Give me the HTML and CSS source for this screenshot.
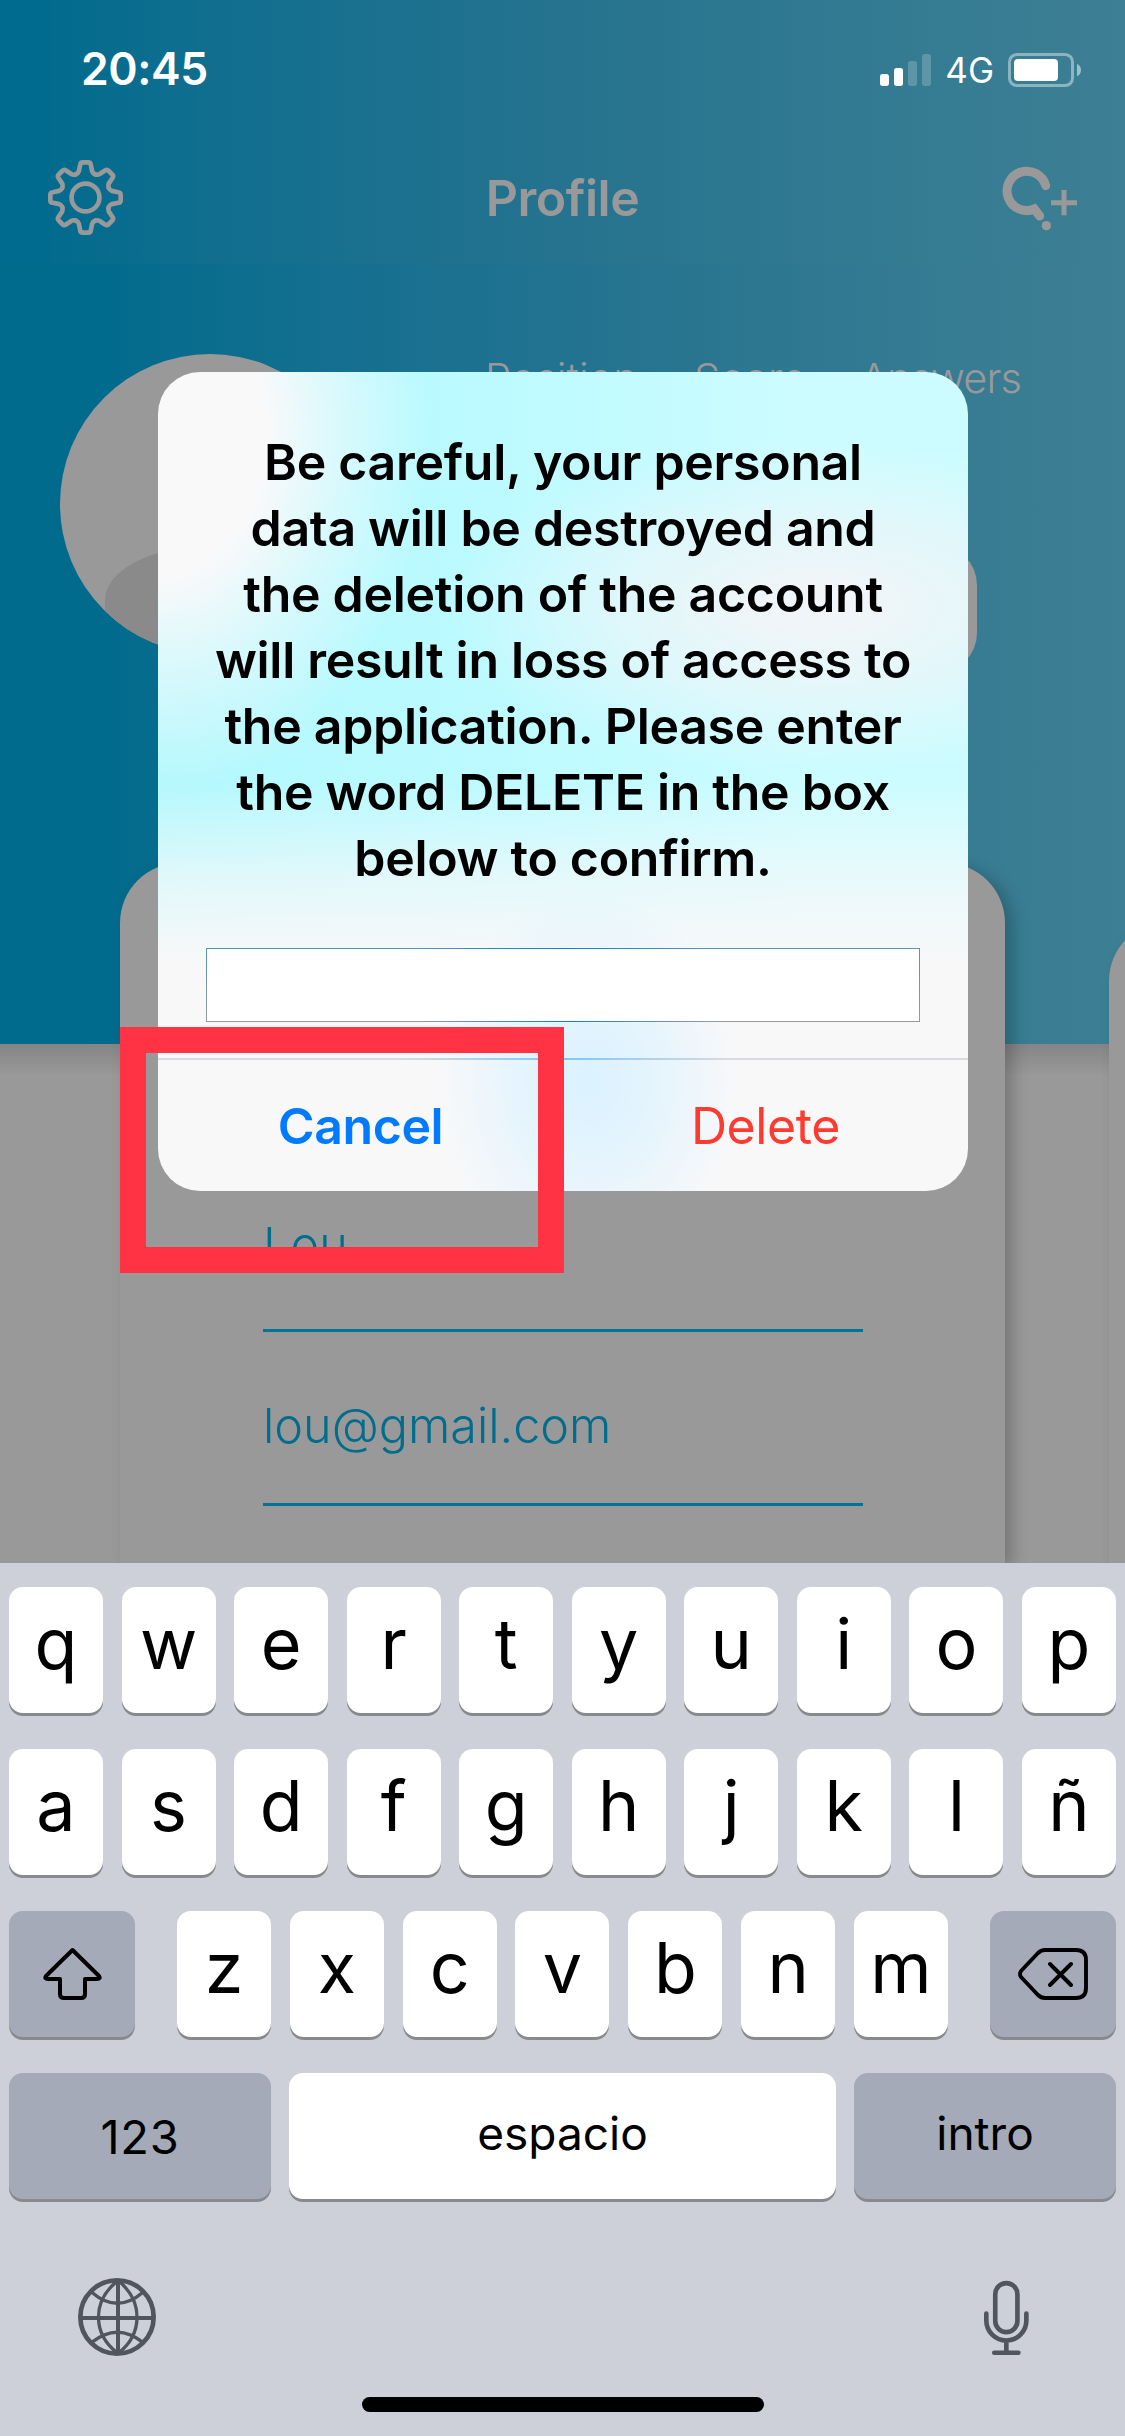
FILE: index.html
```html
<!DOCTYPE html>
<html lang="en">
<head>
<meta charset="utf-8">
<title>Profile</title>
<link rel="stylesheet" href="styles.css">
</head>
<body>
<div class="phone">
  <header class="top">
    <div class="status">
      <span class="time">20:45</span>
      <div class="indicators">
        <svg class="signal" viewBox="63 66 153 102"><g fill="#fff"><rect x="63" y="129" width="27" height="36" rx="8"/><rect x="105" y="111" width="27" height="54" rx="8"/><g opacity=".2"><rect x="147" y="90" width="27" height="75" rx="8"/><rect x="189" y="69" width="27" height="96" rx="8"/></g></g></svg>
        <span class="network">4G</span>
        <svg class="battery" viewBox="444 66 219 102"><rect x="448.500" y="70.500" width="189" height="93" rx="22" fill="none" stroke="#fff" stroke-width="9" opacity=".42"/><rect x="462" y="84" width="132" height="66" rx="12" fill="#fff"/><path d="M651 98Q663 104 663 117T651 136Z" fill="#fff" opacity=".5"/></svg>
      </div>
    </div>
    <nav class="nav">
      <svg class="gear" viewBox="54 59 226 226" fill="none" stroke="#999" stroke-width="14" stroke-linecap="round" stroke-linejoin="round">
        <defs><path id="tooth" d="M138 102Q145 99 147 93L151 73Q152 66 159 66H175Q182 66 183 73L187 93Q189 99 196 102"/></defs>
        <use href="#tooth"/><use href="#tooth" transform="rotate(45 167 172)"/><use href="#tooth" transform="rotate(90 167 172)"/><use href="#tooth" transform="rotate(135 167 172)"/><use href="#tooth" transform="rotate(180 167 172)"/><use href="#tooth" transform="rotate(225 167 172)"/><use href="#tooth" transform="rotate(270 167 172)"/><use href="#tooth" transform="rotate(315 167 172)"/>
        <circle cx="167" cy="172" r="42"/>
      </svg>
      <h1 class="title">Profile</h1>
      <svg class="ask" viewBox="426 405 225 195" fill="none" stroke="#999"><path d="M557 464A59 59 0 1 0 523 534L539 555" stroke-width="27" stroke-linecap="round" stroke-linejoin="miter"/><circle cx="559" cy="584" r="14" fill="#999" stroke="none"/><path d="M573 515H651M612 477V553" stroke-width="15"/></svg>
    </nav>
  </header>

  <main class="profile">
    <section class="hero">
      <div class="avatar"></div>
      <div class="summary">
        <div class="stats"><span>Position</span><span>Score</span><span class="answers">Answers</span></div>
        <div class="edit"></div>
      </div>
    </section>
    <section class="cards">
      <form class="card">
        <div class="field name">Lou</div>
        <div class="field mail">lou@gmail.com</div>
      </form>
      <div class="card next"></div>
    </section>
  </main>

  <section class="keyboard">
    <div class="row"><b>q</b><b>w</b><b>e</b><b>r</b><b>t</b><b>y</b><b>u</b><b>i</b><b>o</b><b>p</b></div>
    <div class="row"><b>a</b><b>s</b><b>d</b><b>f</b><b>g</b><b>h</b><b>j</b><b>k</b><b>l</b><b>ñ</b></div>
    <div class="row">
      <span class="fn side"><svg class="shift" viewBox="0 0 60 54" fill="none" stroke="#000" stroke-width="4" stroke-linejoin="round"><path d="M30.500 3L57 29Q59 32 55 32H43V47Q43 51 39 51H22Q18 51 18 47V32H6Q2 32 4 29Z"/></svg></span>
      <div class="letters"><b>z</b><b>x</b><b>c</b><b>v</b><b>b</b><b>n</b><b>m</b></div>
      <span class="fn side"><svg class="erase" viewBox="0 0 70 52" fill="none" stroke="#000" stroke-width="3.900" stroke-linecap="round" stroke-linejoin="round"><path d="M27 2H58Q68 2 68 12V40Q68 50 58 50H27Q23 50 20 47L3 29Q1 26 3 23L20 5Q23 2 27 2ZM32 16L53 37M53 16L32 37"/></svg></span>
    </div>
    <div class="row"><span class="fn wide num">123</span><span class="space">espacio</span><span class="fn wide">intro</span></div>
    <div class="tools">
      <svg class="globe" viewBox="54 54 234 234" fill="none" stroke="#50555e" stroke-width="10"><circle cx="171" cy="171" r="110" stroke-width="14"/><path d="M174 60V282M60 174H282" stroke-width="12"/><path d="M171 64C97 124 97 220 171 278M177 64C249 124 249 220 177 278M95 97Q172 163 249 97M95 247Q172 186 249 247"/></svg>
      <svg class="mic" viewBox="72 59 136 227" fill="none" stroke="#50555e" stroke-width="14" stroke-linecap="round"><rect x="106" y="67" width="67" height="148" rx="33.500"/><path d="M79 159V180A60.500 60.500 0 0 0 200 180V159M139.500 241V277M103 277.500H176"/></svg>
    </div>
    <div class="home"></div>
  </section>

  <div class="dialog">
    <p class="message">Be careful, your personal<br>data will be destroyed and<br>the deletion of the account<br>will result in loss of access to<br>the application. Please enter<br>the word DELETE in the box<br>below to confirm.</p>
    <div class="entry"></div>
    <div class="actions"><span class="cancel">Cancel</span><span class="delete">Delete</span></div>
  </div>
  <div class="marker"></div>
</div>
</body>
</html>
```
FILE: styles.css
```css
* { box-sizing: border-box; }
body { margin: 0; font-family: Inter, "Liberation Sans", sans-serif; }
svg { display: block; flex: none; }
.phone { position: relative; width: 1125px; height: 2436px; overflow: hidden; display: flex; flex-direction: column; background: #999; }

/* Status bar and navigation */
.top { height: 264px; flex: none; background: linear-gradient(90deg, #006b8e 0, #006b8e 3%, #106e8f 18%, #25738f 50%, #347b92 80%, #3d7f94 100%); }
.status { height: 140px; display: flex; justify-content: space-between; align-items: center; padding: 0 44px 0 81px; }
.time { color: #fff; font-size: 44.5px; font-weight: 600; letter-spacing: -.4px; padding-bottom: 2px; }
.indicators { display: flex; align-items: center; }
.signal { width: 51px; height: 34px; }
.network { color: #fff; font-size: 35px; font-weight: 420; margin: 0 14px 0 14px; }
.battery { width: 73px; height: 34px; }
.nav { height: 116px; display: grid; grid-template-columns: 1fr auto 1fr; align-items: center; padding: 0 48px; }
.gear { width: 75px; height: 75px; margin-top: -2px; }
.title { margin: 0; color: #999; font-size: 50px; font-weight: 600; letter-spacing: -.5px; }
.ask { width: 75px; height: 65px; justify-self: end; }

/* Profile page */
.profile { height: 1299px; flex: none; display: flex; flex-direction: column; background: linear-gradient(90deg, #006b8d 0, #006b8d 8%, #106e8f 24%, #1d7190 42%, #2b7690 65%, #397d93 90%, #3d7f94 100%) 0 0 / 100% 780px no-repeat, linear-gradient(#858585, #999 32px) 0 780px / 100% 519px no-repeat; }
.hero { height: 599px; flex: none; display: flex; padding-left: 60px; }
.avatar { width: 300px; height: 300px; margin-top: 90px; border-radius: 50%; background: #999; overflow: hidden; padding: 192px 45px 0; }
.avatar::after { content: ""; display: block; height: 108px; border-radius: 50% 50% 0 0; background: #8a8a8a; }
.summary { width: 617px; padding: 90px 0 0 125px; }
.stats { display: grid; grid-template-columns: 209px 166px 170px; color: #999; font-size: 41.5px; font-weight: 300; line-height: 49px; }
.answers { letter-spacing: -.9px; }
.edit { height: 128px; margin-top: 142px; border-radius: 40px; background: #999; }
.cards { display: flex; gap: 104px; padding-left: 120px; height: 700px; }
.card { width: 885px; height: 700px; flex: none; border-radius: 60px 60px 0 0; background: #999; box-shadow: 8px 4px 16px rgba(0,0,0,.22); padding: 353px 142px 0 143px; }
.next { margin-top: 58px; }
.field { border-bottom: 3px solid #007396; color: #006d8d; font-size: 48.5px; font-weight: 300; line-height: 58px; }
.name { height: 116px; }
.mail { margin-top: 65px; height: 109px; }

/* Keyboard */
.keyboard { height: 873px; flex: none; padding: 24px 9px 0; background: #cdd0d9; display: flex; flex-direction: column; }
.row { height: 126px; margin-bottom: 36px; display: flex; justify-content: space-between; }
.row b, .fn, .space { height: 126px; border-radius: 14px; background: #fff; box-shadow: 0 3px 0 #87898d; display: flex; align-items: center; justify-content: center; }
.row b { width: 94px; font-size: 70px; font-weight: 380; padding-bottom: 13px; }
.letters { width: 771px; display: flex; justify-content: space-between; }
.row .fn { background: #a4aab7; }
.side { width: 126px; }
.wide { width: 262px; }
.space { width: 547px; }
.wide, .space { font-size: 46px; font-weight: 380; padding-bottom: 6px; }
.wide.num { padding-bottom: 0; font-size: 47px; letter-spacing: .8px; }
.shift { width: 60px; height: 54px; }
.erase { width: 70px; height: 52px; }
.tools { display: flex; justify-content: space-between; padding: 43px 87px 0 69px; height: 162px; }
.globe { width: 78px; height: 78px; }
.mic { width: 45px; height: 76px; margin-top: 2px; }
.home { width: 402px; height: 15px; border-radius: 8px; background: #000; margin: 0 auto; }

/* Alert above the page */
.dialog { position: absolute; left: 158px; top: 372px; width: 810px; height: 819px; border-radius: 42px; overflow: hidden; display: flex; flex-direction: column;
  background: radial-gradient(ellipse 150px 190px at 430px 710px, rgba(219,242,255,1) 5%, rgba(219,242,255,.6) 50%, rgba(219,242,255,0) 100%),
    linear-gradient(rgba(248,248,249,0) 410px, rgba(248,248,249,.65) 505px, #f8f8f9 590px),
    radial-gradient(ellipse 270px 360px at 0 60px, #f9f9fa 40%, rgba(249,249,250,.5) 68%, rgba(249,249,250,0) 100%),
    radial-gradient(ellipse 370px 165px at 660px 235px, #eff5f8 15%, rgba(239,245,248,.6) 55%, rgba(239,245,248,0) 100%),
    linear-gradient(90deg, #b3f8fd, #bafaff 35%, #ccfcff 80%); }
.message { margin: 57px 0 0; height: 519px; text-align: center; font-size: 50px; font-weight: 600; line-height: 66px; letter-spacing: -.3px; color: #000; white-space: nowrap; }
.entry { height: 74px; flex: none; margin: 0 48px 36px; border: 1px solid transparent;
  background: linear-gradient(#fff, #fff) padding-box, linear-gradient(90deg, transparent 30%, #1283c4 50%, transparent 70%) border-box, linear-gradient(#5298a8, #999) border-box; }
.actions { flex: 1; display: grid; grid-template-columns: 1fr 1fr; align-items: center; text-align: center; padding-top: 2px; font-size: 50px; letter-spacing: -.4px;
  background: linear-gradient(90deg, #d9d9de 30%, #7cc8f8 50%, #d9d9de 70%) 0 0 / 100% 2px no-repeat; }
.cancel { color: #007aff; font-weight: 600; }
.delete { color: #ff3b30; font-weight: 400; }

.marker { position: absolute; left: 120px; top: 1027px; width: 444px; height: 246px; border: 26px solid #ff3344; }
```
